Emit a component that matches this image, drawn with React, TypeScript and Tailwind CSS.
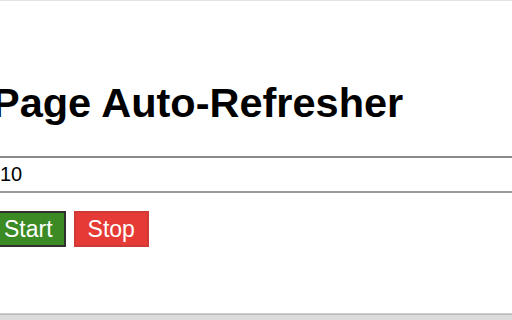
import React from "react";

export default function App() {
  return (
    <div
      className="w-[512px] h-[320px] overflow-hidden bg-white flex flex-col border-t border-[#e3e3e3]"
      style={{ fontFamily: '"Liberation Sans", Arial, sans-serif' }}
    >
      <div className="flex-1 flex flex-col ml-[-8px] w-[540px]">
        <h1 className="mt-[78px] text-[41.5px] leading-[47px] font-bold text-black whitespace-nowrap">
          Page Auto-Refresher
        </h1>
        <input
          type="text"
          defaultValue="10"
          className="mt-[30px] h-[37px] w-[540px] border-y-2 border-x-2 border-t-[#8a8a8a] border-b-[#9a9a9a] border-x-[#8a8a8a] pl-[6px] text-[20px] text-black outline-none bg-white"
          style={{ fontFamily: '"Liberation Sans", Arial, sans-serif' }}
        />
        <div className="mt-[18px] flex gap-2 ml-[-1px]">
          <button className="h-[36px] px-[11px] border-2 border-[#2f2f2f] bg-[#3b8a23] text-white text-[23px] leading-[26px]">
            Start
          </button>
          <button className="h-[36px] px-[12px] border-2 border-[#cf3a36] bg-[#e63a36] text-white text-[23px] leading-[26px]">
            Stop
          </button>
        </div>
      </div>
      <div className="h-[7px] shrink-0 border-t border-[#cfcfcf] bg-[#dcdcdc] flex flex-col">
        <div className="h-px bg-[#b9b9b9]" />
      </div>
    </div>
  );
}
